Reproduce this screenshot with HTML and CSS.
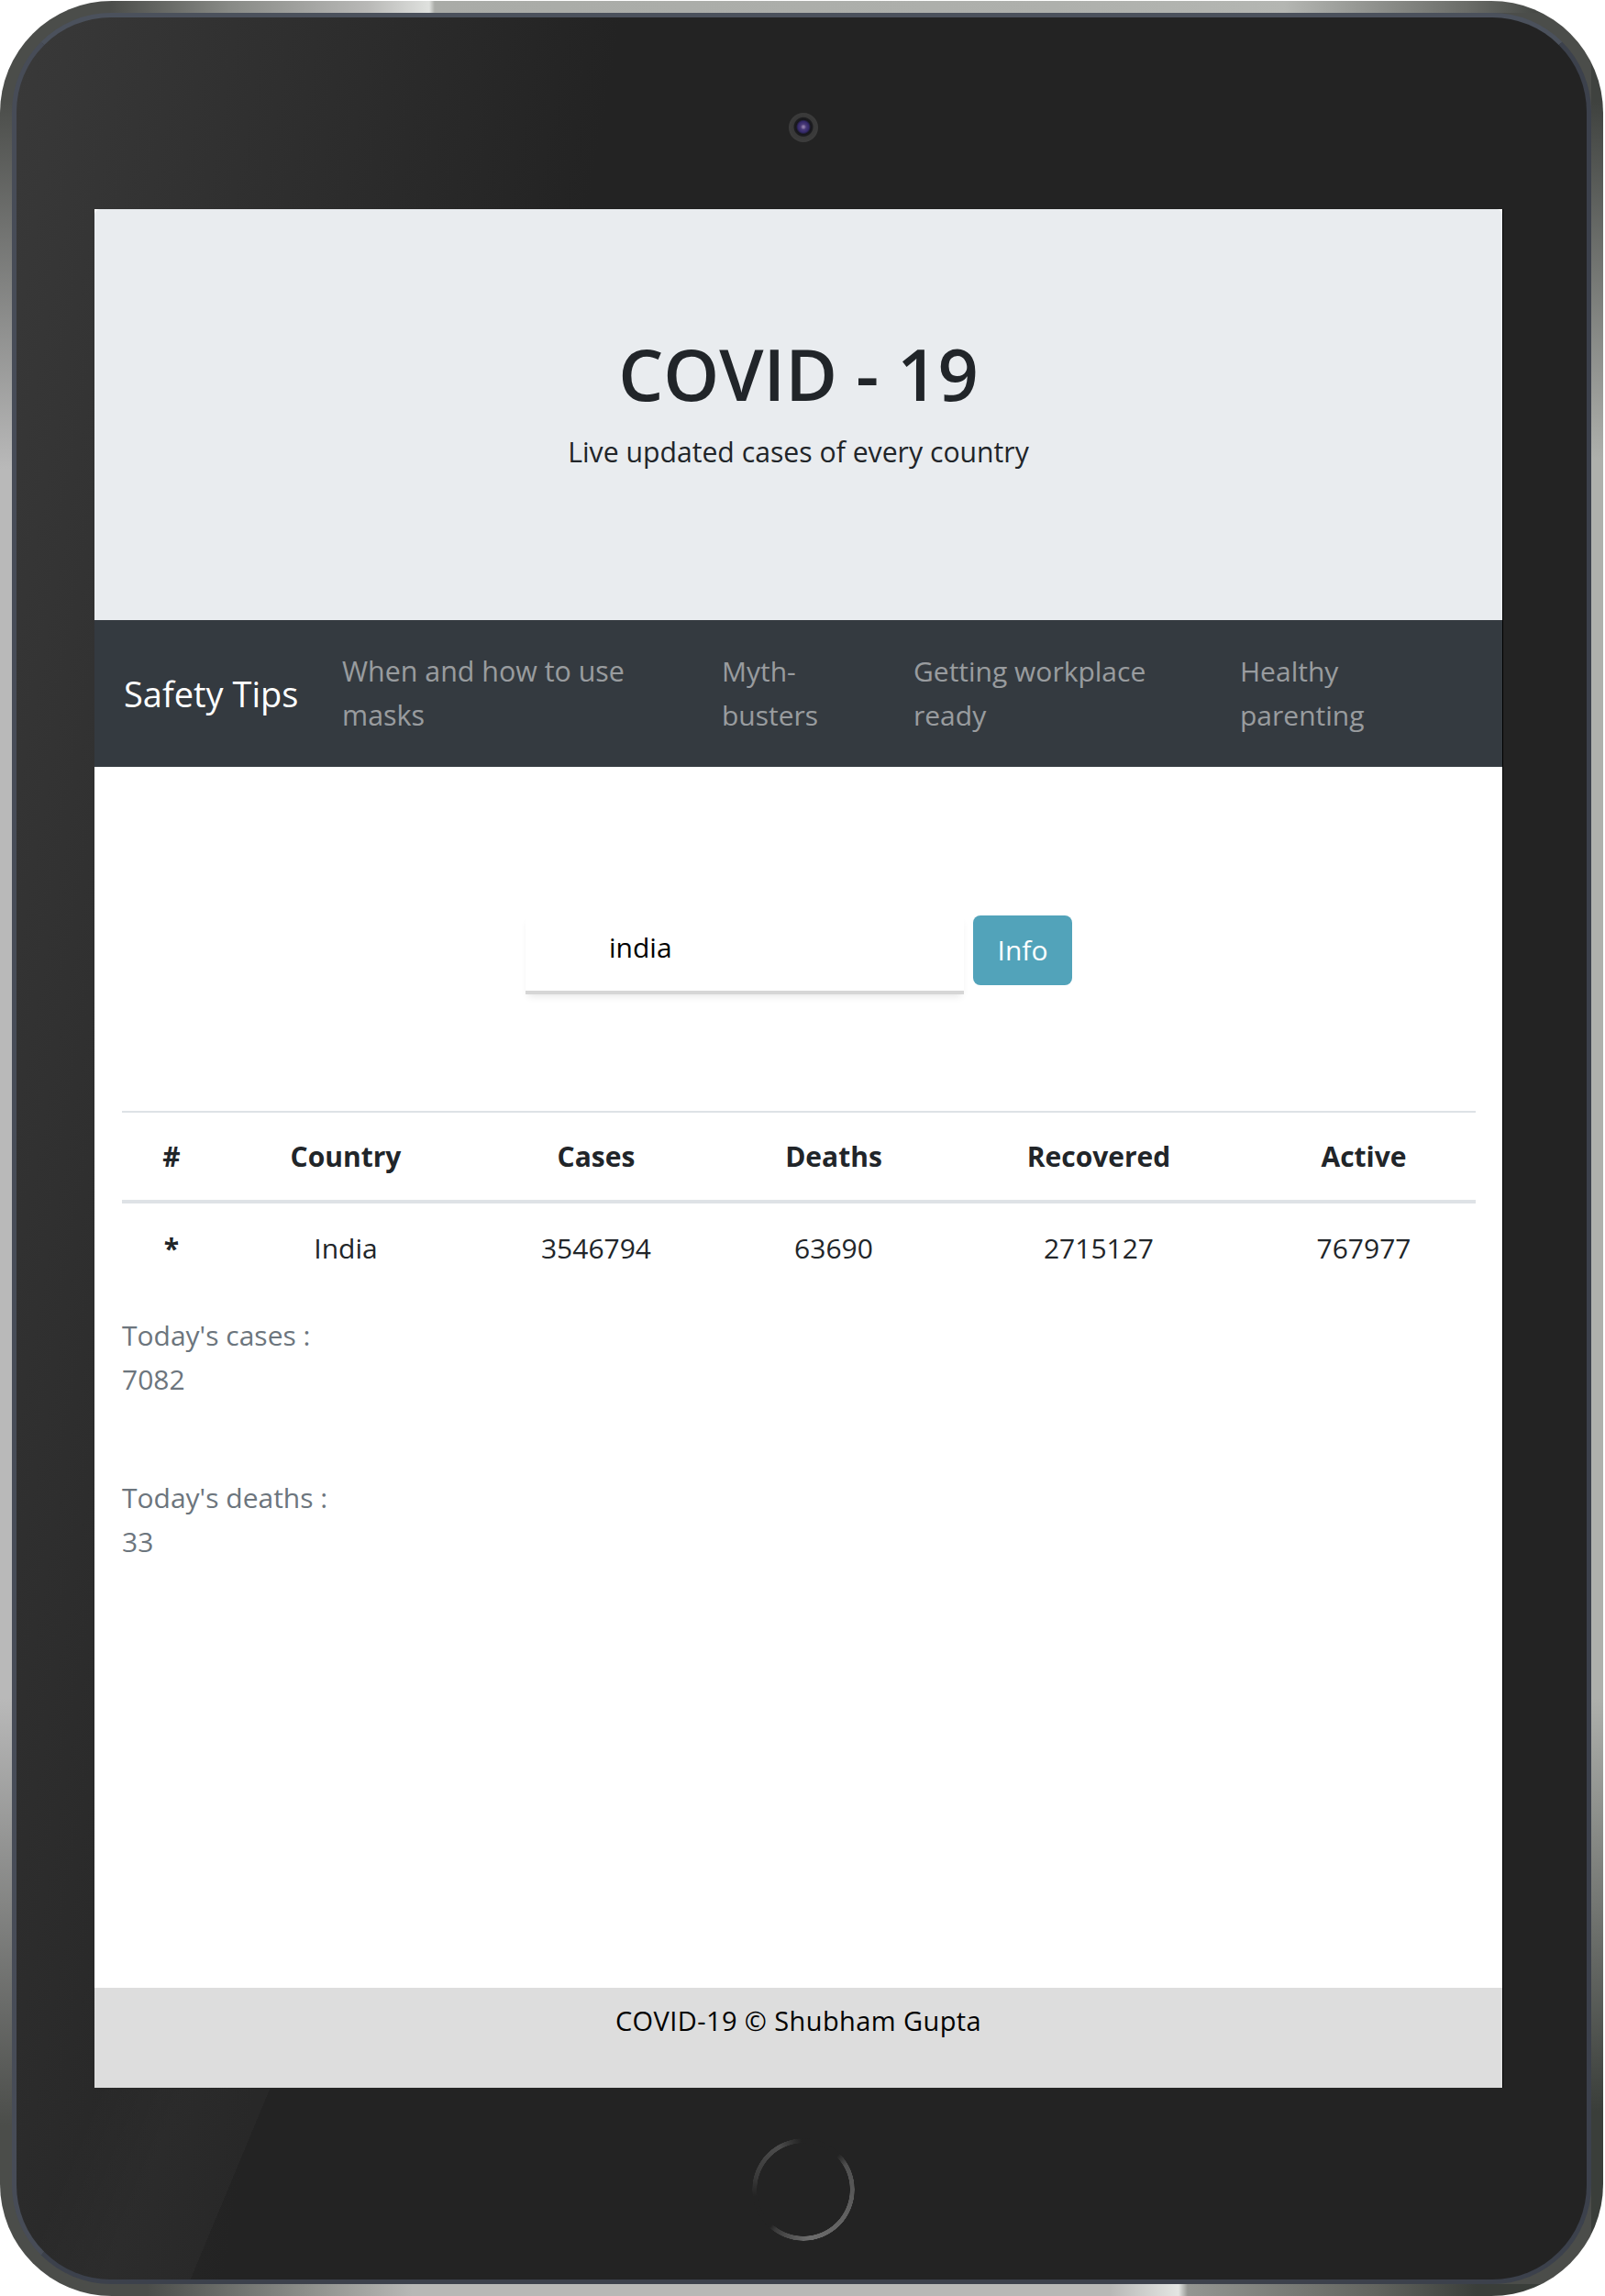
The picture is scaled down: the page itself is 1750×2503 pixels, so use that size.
FILE: index.html
```html
<!DOCTYPE html>
<html lang="en">
<head>
    <meta charset="UTF-8">
    <meta name="viewport" content="width=device-width, initial-scale=1.0">
    <title>COVID - 19</title>
    <link rel="stylesheet" href="styles.css">
</head>
<body>
    <div class="tablet">
        <div class="bezel">
            <div class="top-bar"><span class="camera"></span></div>
            <div class="screen">
                <div class="jumbotron">
                    <h1>COVID - 19</h1>
                    <p>Live updated cases of every country</p>
                </div>
                <nav class="navbar">
                    <a class="brand" href="#">Safety Tips</a>
                    <a class="nav-link link-masks" href="#">When and how to use masks</a>
                    <a class="nav-link link-myth" href="#">Myth-busters</a>
                    <a class="nav-link link-work" href="#">Getting workplace ready</a>
                    <a class="nav-link link-parent" href="#">Healthy parenting</a>
                </nav>
                <main class="content">
                    <form class="search">
                        <input class="search-input" type="text" value="india">
                        <button class="btn-info" type="button">Info</button>
                    </form>
                    <table class="stats">
                        <thead>
                            <tr>
                                <th class="col-num">#</th>
                                <th class="col-country">Country</th>
                                <th class="col-cases">Cases</th>
                                <th class="col-deaths">Deaths</th>
                                <th class="col-recovered">Recovered</th>
                                <th class="col-active">Active</th>
                            </tr>
                        </thead>
                        <tbody>
                            <tr>
                                <th>*</th>
                                <td>India</td>
                                <td>3546794</td>
                                <td>63690</td>
                                <td>2715127</td>
                                <td>767977</td>
                            </tr>
                        </tbody>
                    </table>
                    <p class="today">Today's cases :<br>7082</p>
                    <p class="today">Today's deaths :<br>33</p>
                </main>
                <footer class="footer">COVID-19 © Shubham Gupta</footer>
            </div>
            <div class="bottom-bar"><span class="home"></span></div>
        </div>
    </div>
</body>
</html>
```

FILE: styles.css
```css
html, body { margin: 0; padding: 0; background: #fff; }
body { font-family: "Open Sans", "Noto Sans", sans-serif; width: 1750px; height: 2503px; overflow: hidden; }
* { box-sizing: border-box; }

/* tablet frame */
.tablet { width: 1748px; height: 2502px; margin: 1px 0 0 0; padding: 13px; border-radius: 122px;
    background-color: #4b4d4a;
    background-image:
        linear-gradient(90deg, #4b4d4a 120px, #888a86 250px, #b8b8b6 400px, #dfe1de 468px, #a9aba7 474px, #aeb0ac 1150px, #b4b6b2 1400px, #6a6c68 1600px, #3f423f 1690px),
        linear-gradient(90deg, #4b4d4a 160px, #8f918d 340px, #b8b8b6 450px, #b8b8b6 1210px, #e4e6e3 1285px, #949692 1295px, #62645f 1500px, #3a3e3a 1610px),
        linear-gradient(180deg, #4b4d4a 110px, #b9b9b9 510px, #b9b9b9 1850px, #4b4d4a 2316px),
        linear-gradient(180deg, #3f423f 110px, #aeb0ac 500px, #aeb0ac 1850px, #3a3e3a 2300px);
    background-size: 100% 13px, 100% 13px, 13px 100%, 13px 100%;
    background-position: top left, bottom left, top left, top right;
    background-repeat: no-repeat; }
.bezel { height: 100%; display: flex; flex-direction: column; align-items: flex-start; padding: 0 90px 0 85px; border: 5px solid; border-color: #4b515c #3c414c #3c414c #474c57; border-radius: 108px; overflow: hidden;
    background-color: #232323;
    background-image:
        linear-gradient(112.6deg, transparent 80px, rgba(255,255,255,.025) 170px, rgba(255,255,255,.025) 255px, transparent 255px),
        linear-gradient(100deg, #393939 0, #232323 650px);
    background-size: 400px 208px, 100% 100%;
    background-position: bottom left, top left;
    background-repeat: no-repeat; }

.top-bar { height: 209px; width: 100%; display: flex; justify-content: center; padding: 104px 0 0 9px; }
.bottom-bar { flex: 1; width: 100%; display: flex; justify-content: center; padding: 55px 0 0 9px; }
.camera { width: 32px; height: 32px; border-radius: 50%; background: radial-gradient(circle at 50% 48%, #8b7aa8 0, #8b7aa8 1px, #4a3a78 3px, #33286a 6px, #17171b 8px, #1d1d20 10px, #383838 11px, #3c3c3c 16px); }
.home { width: 112px; height: 112px; border-radius: 50%;
    background: conic-gradient(from 0deg, #232323 0deg, #232323 45deg, #4f4f4f 60deg, #606060 120deg, #6c6c6c 175deg, #3a3a3a 215deg, #232323 222deg, #232323 262deg, #3a3a3a 285deg, #4c4c4c 330deg, #232323 358deg);
    -webkit-mask: radial-gradient(circle, transparent 50.5px, #000 51px, #000 55.5px, transparent 56px);
    mask: radial-gradient(circle, transparent 50.5px, #000 51px, #000 55.5px, transparent 56px); }

/* screen */
.screen { width: 1536px; height: 2048px; flex: none; background: #fff; display: flex; flex-direction: column; color: #212529; font-size: 30px; line-height: 48px; border-right: 1px solid #000; }
.jumbotron { height: 448px; background: #e9ecef; text-align: center; padding-top: 131px; border-radius: 6px 6px 0 0; }
.jumbotron h1 { margin: 0 0 14px; font-size: 77.5px; font-weight: 600; line-height: 96px; }
.jumbotron p { margin: 0; font-size: 30.2px; }

.navbar { height: 160px; background: #343a40; display: flex; align-items: center; padding: 0 32px; }
.navbar a { text-decoration: none; }
.brand { color: #fff; font-size: 38px; width: 238px; flex: none; }
.nav-link { color: rgba(255,255,255,.5); flex: none; }
.link-masks { width: 414px; padding-right: 90px; font-size: 30.4px; }
.link-myth { width: 209px; padding-right: 100px; }
.link-work { width: 356px; padding-right: 80px; }
.link-parent { width: 170px; }

.content { flex: 1; padding: 0 30px; }
.search { display: flex; margin: 162px 0 0 440px; height: 96px; }
.search-input { width: 478px; height: 86px; padding: 0 0 14px 91px; border: 0; border-bottom: 4px solid #d6d6d6; outline: 0; font: inherit; color: #000; background: #fff; box-shadow: 0 5px 8px -3px rgba(0,0,0,.1); }
.btn-info { width: 108px; height: 76px; margin-left: 10px; border: 0; border-radius: 8px; background: #52a3ba; color: #fff; font: inherit; padding: 0; }

.stats { table-layout: fixed; width: 1476px; margin-top: 117px; border-collapse: collapse; text-align: center; }
.stats th, .stats td { padding: 0; height: 98px; }
.stats thead th { border-top: 2px solid #dee2e6; border-bottom: 4px solid #dee2e6; font-weight: 700; }
.stats tbody th, .stats tbody td { height: 99px; font-weight: 400; }
.stats tbody th { font-weight: 700; }
.col-num { width: 108px; }
.col-country { width: 272px; }
.col-cases { width: 274px; }
.col-deaths { width: 244px; }
.col-recovered { width: 334px; }
.col-active { width: 244px; }

.stats + .today { margin-top: 23px; }
.today { margin: 0 0 81px; color: #6c757d; }
.footer { height: 109px; background: #ddd; color: #000; text-align: center; padding-top: 12px; font-size: 29px; letter-spacing: .4px; }
```
